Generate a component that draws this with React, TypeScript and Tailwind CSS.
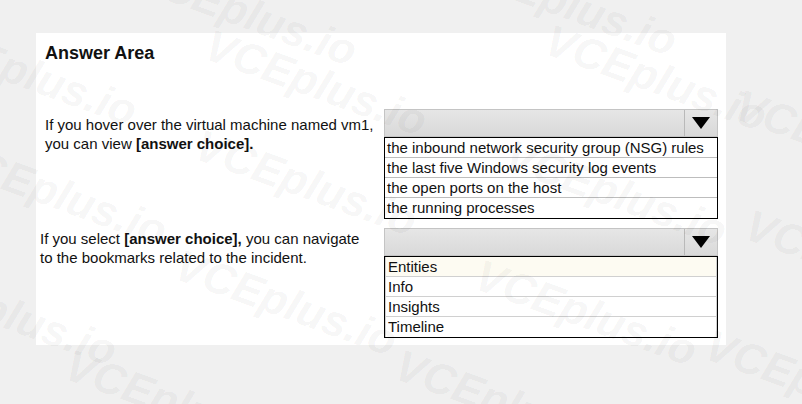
import React from 'react';

const marks = [
  { x: 130, y: -20 },
  { x: 450, y: -30 },
  { x: -90, y: 40 },
  { x: 200, y: 50 },
  { x: 540, y: 45 },
  { x: -60, y: 160 },
  { x: 190, y: 150 },
  { x: 500, y: 160 },
  { x: 730, y: 110 },
  { x: -110, y: 280 },
  { x: 170, y: 270 },
  { x: 470, y: 280 },
  { x: 740, y: 230 },
  { x: 60, y: 370 },
  { x: 390, y: 370 },
  { x: 700, y: 350 },
];

function Dropdown({ options, tight }: { options: string[]; tight?: boolean }) {
  return (
    <div className="w-[334px] shrink-0">
      <div className="flex h-[28px] border border-[#c4c4c4] bg-gradient-to-b from-[#e6e6e6] to-[#d9d9d9]">
        <div className="flex-1" />
        <div className="flex w-[33px] items-center justify-center border-l border-[#b9b9b9]">
          <svg width="20" height="14" viewBox="0 0 20 14">
            <polygon points="1,1 19,1 10,13" fill="#000" />
          </svg>
        </div>
      </div>
      <div className="border-[1.5px] border-black bg-white">
        {options.map((o, i) => (
          <div
            key={o}
            className={`h-[20px] px-[2px] text-[15px] leading-[20px] text-[#111] ${
              i < options.length - 1 ? 'border-b border-[#bdbdbd]' : ''
            } ${tight ? 'border-x border-[#d0d0d0]' : ''} ${tight && i === 0 ? 'bg-[#fdfbf2]' : ''}`}
          >
            {o}
          </div>
        ))}
      </div>
    </div>
  );
}

export default function App() {
  return (
    <div
      className="relative h-[404px] w-[802px] overflow-hidden bg-[#f0f0f0] pl-[36px] pt-[33px]"
      style={{ fontFamily: '"Liberation Sans", Arial, sans-serif' }}
    >
      <div className="flex h-[312px] w-[690px] flex-col bg-white">
        <h1 className="ml-[9px] mt-[9px] text-[18px] font-bold leading-[22px] text-[#111]">Answer Area</h1>

        <div className="mt-[45px] flex">
          <p className="ml-[9px] mt-[6px] w-[339px] text-[15px] leading-[19px] text-[#111]">
            If you hover over the virtual machine named vm1,
            <br />
            you can view <b>[answer choice].</b>
          </p>
          <Dropdown
            options={[
              'the inbound network security group (NSG) rules',
              'the last five Windows security log events',
              'the open ports on the host',
              'the running processes',
            ]}
          />
        </div>

        <div className="mt-[9px] flex">
          <p className="ml-[4px] mt-[1px] w-[344px] text-[15px] leading-[19px] text-[#111]">
            If you select <b>[answer choice],</b> you can navigate
            <br />
            to the bookmarks related to the incident.
          </p>
          <Dropdown options={['Entities', 'Info', 'Insights', 'Timeline']} tight />
        </div>
      </div>

      {marks.map((m, i) => (
        <span
          key={i}
          className="pointer-events-none absolute rotate-[20deg] whitespace-nowrap text-[44px] font-bold italic text-black/[0.05]"
          style={{ left: m.x, top: m.y }}
        >
          VCEplus.io
        </span>
      ))}
    </div>
  );
}
